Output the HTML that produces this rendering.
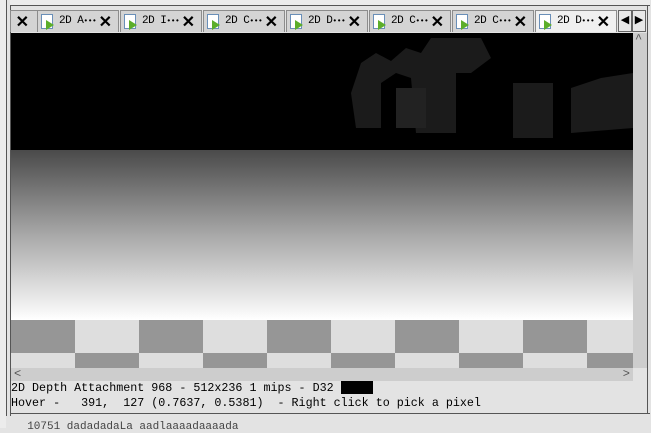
<!DOCTYPE html><html><head><style>
body{margin:0;width:651px;height:428px;background:#e3e3e3;position:relative;overflow:hidden;font-family:"Liberation Mono",monospace;}
.a{position:absolute}
.tab{position:absolute;top:10px;height:22px;width:82px;background:#d4d4d4;border:1px solid #8c8c8c;border-bottom:none;font-size:11px;box-sizing:border-box}
.tab .ic{position:absolute;left:3px;top:3px;width:12px;height:15px;background:#fff;border:1px solid #6a8fb8;box-sizing:border-box}
.tab .ar{position:absolute;left:8px;top:9px;width:0;height:0;border-left:8px solid #5cae2a;border-top:5px solid transparent;border-bottom:5px solid transparent}
.tab .t{position:absolute;left:21px;top:4px;letter-spacing:-0.5px;white-space:pre}
.tab .x{position:absolute;right:6px;top:1px;font-family:"Liberation Sans",sans-serif;font-size:16px;font-weight:bold}
</style></head><body>
<div class="a" style="left:0;top:0;width:6px;height:428px;background:#ececec"></div>
<div class="a" style="left:6px;top:0;width:1px;height:416px;background:#555"></div>
<div class="a" style="left:10px;top:0;width:1px;height:416px;background:#555"></div>
<div class="a" style="left:10px;top:0;width:640px;height:5px;border-bottom:1px solid #555;background:#ececec"></div>
<div class="tab" style="left:10px;width:28px"><span class="x" style="right:8px">✕</span></div>
<div class="tab" style="left:37px"><div class="ic"></div><div class="ar"></div><span class="t">2D A<span style="font-size:8px">•••</span></span><span class="x">✕</span></div>
<div class="tab" style="left:120px"><div class="ic"></div><div class="ar"></div><span class="t">2D I<span style="font-size:8px">•••</span></span><span class="x">✕</span></div>
<div class="tab" style="left:203px"><div class="ic"></div><div class="ar"></div><span class="t">2D C<span style="font-size:8px">•••</span></span><span class="x">✕</span></div>
<div class="tab" style="left:286px"><div class="ic"></div><div class="ar"></div><span class="t">2D D<span style="font-size:8px">•••</span></span><span class="x">✕</span></div>
<div class="tab" style="left:369px"><div class="ic"></div><div class="ar"></div><span class="t">2D C<span style="font-size:8px">•••</span></span><span class="x">✕</span></div>
<div class="tab" style="left:452px"><div class="ic"></div><div class="ar"></div><span class="t">2D C<span style="font-size:8px">•••</span></span><span class="x">✕</span></div>
<div class="tab" style="left:535px;background:#f0f0f0"><div class="ic"></div><div class="ar"></div><span class="t">2D D<span style="font-size:8px">•••</span></span><span class="x">✕</span></div>
<div class="a" style="left:618px;top:10px;width:14px;height:22px;border:1px solid #666;box-sizing:border-box;background:#e8e8e8;font-size:11px;text-align:center;line-height:20px">◀</div>
<div class="a" style="left:632px;top:10px;width:14px;height:22px;border:1px solid #666;box-sizing:border-box;background:#e8e8e8;font-size:11px;text-align:center;line-height:20px">▶</div>
<div class="a" style="left:11px;top:33px;width:622px;height:117px;background:#000;overflow:hidden">
<svg width="622" height="117"><g fill="#1b1b1b">
<path d="M340 60 L350 30 L365 20 L380 28 L395 15 L410 20 L420 5 L470 5 L480 25 L460 40 L445 40 L445 100 L405 100 L400 45 L385 40 L370 50 L370 95 L345 95 Z"/>
<rect x="385" y="55" width="30" height="40" fill="#222"/>
<rect x="502" y="50" width="40" height="55"/>
<path d="M560 55 L590 45 L622 40 L622 95 L560 100 Z"/>
</g></svg></div>
<div class="a" style="left:11px;top:150px;width:622px;height:170px;background:linear-gradient(#4a4a4a,#a8a8a8 50%,#fff)"></div>
<div class="a" style="left:11px;top:320px;width:622px;height:48px;overflow:hidden;background:#dedede">
<div class="a" style="left:0;top:0;width:100%;height:33px;background:repeating-linear-gradient(90deg,#969696 0 64px,#dedede 64px 128px)"></div>
<div class="a" style="left:0;top:33px;width:100%;height:15px;background:repeating-linear-gradient(90deg,#dedede 0 64px,#969696 64px 128px)"></div>
</div>
<div class="a" style="left:633px;top:33px;width:15px;height:335px;background:#cdcdcd"></div>
<div class="a" style="left:635px;top:32px;font-size:12px;color:#555">^</div>
<div class="a" style="left:11px;top:368px;width:622px;height:13px;background:#cdcdcd;font-size:12px;color:#555;line-height:13px"><span style="position:absolute;left:3px">&lt;</span><span style="position:absolute;right:3px">&gt;</span></div>
<div class="a" style="left:11px;top:381px;font-size:11.7px;line-height:14px;white-space:pre">2D Depth Attachment 968 - 512x236 1 mips - D32 <span style="display:inline-block;width:32px;height:13px;background:#000;vertical-align:top"></span></div>
<div class="a" style="left:11px;top:396px;font-size:11.7px;line-height:14px;white-space:pre">Hover -   391,  127 (0.7637, 0.5381)  - Right click to pick a pixel</div>
<div class="a" style="left:10px;top:413px;width:640px;height:1px;background:#555"></div>
<div class="a" style="left:647px;top:5px;width:1px;height:409px;background:#555"></div>
<div class="a" style="left:14px;top:421px;font-size:11px;color:#444;white-space:pre">  10751 dadadadaLa aadlaaaadaaaada</div>
</body></html>
